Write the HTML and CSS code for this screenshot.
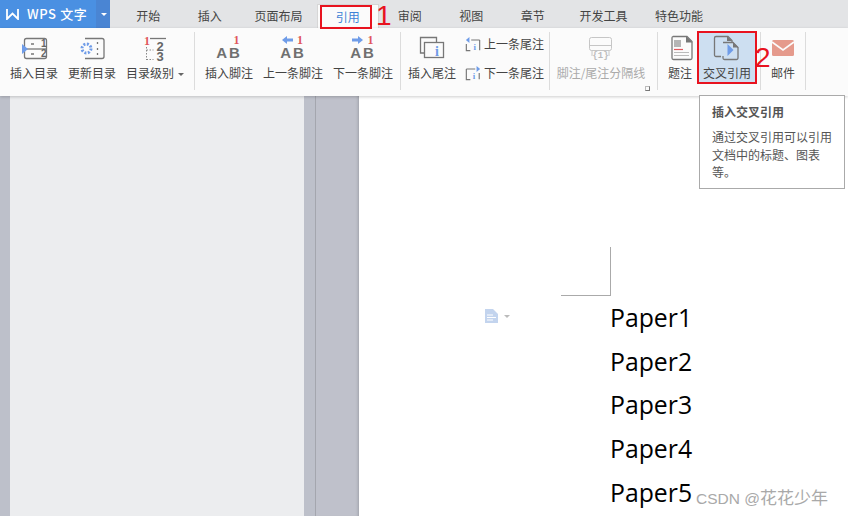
FILE: index.html
```html
<!DOCTYPE html>
<html lang="zh">
<head>
    <meta charset="UTF-8">
    <title>WPS 文字</title>
    <link rel="stylesheet" href="styles.css">
</head>
<body>
<div id="app">
    <div class="tabbar">
        <div class="logo">
            <div class="logo-main">
                <svg class="logo-w" width="13" height="12" viewBox="0 0 13 12"><path d="M1 1v10l5.500-5.500L12 11V1" fill="none" stroke="#fff" stroke-width="1.8"/></svg>
                <span>WPS 文字</span>
            </div>
            <div class="logo-drop"></div>
        </div>
        <ul class="tabs">
            <li class="tab">开始</li>
            <li class="tab">插入</li>
            <li class="tab wide">页面布局</li>
            <li class="tab active">引用</li>
            <li class="tab">审阅</li>
            <li class="tab">视图</li>
            <li class="tab">章节</li>
            <li class="tab wide dev">开发工具</li>
            <li class="tab wide">特色功能</li>
        </ul>
    </div>

    <div class="ribbon">
        <div class="group grp-toc">
            <div class="btn">
                <svg class="ico" viewBox="0 0 40 34"><rect x="10.5" y="7.5" width="22" height="20" rx="2" class="ln"/><path d="M10 18h22" class="ln"/><path d="M8 13l6 5-6 5z" class="blue"/><path d="M17 13h3M17 23h3" class="ln"/><text x="27" y="16" class="num">1</text><text x="27" y="26" class="num">2</text></svg>
                <span class="label">插入目录</span>
            </div>
            <div class="btn">
                <svg class="ico" viewBox="0 0 40 34"><path d="M13 7.500h17a2 2 0 0 1 2 2v16a2 2 0 0 1-2 2H13" class="ln"/><circle cx="14.500" cy="17.500" r="4.500" fill="none" stroke="#6f9ce8" stroke-width="3" stroke-dasharray="2 1.500"/><path d="M25.500 11v2M25.500 17v2M25.500 22v2" class="ln"/></svg>
                <span class="label">更新目录</span>
            </div>
            <div class="btn btn-more">
                <svg class="ico" viewBox="0 0 40 34"><text x="12" y="14" class="red-num">1</text><path d="M15 7.500h16" class="ln"/><text x="25" y="19.500" class="big-num">2</text><text x="25" y="30" class="big-num">3</text><path d="M11.500 16v13M11.500 19h7M11.500 28.500h7" class="dots"/></svg>
                <span class="label">目录级别<i class="caret"></i></span>
            </div>
        </div>
        <div class="group grp-foot">
            <div class="btn">
                <svg class="ico" viewBox="0 0 40 34"><text x="27.500" y="13" class="red-num">1</text><text x="20" y="27" class="ab">AB</text></svg>
                <span class="label">插入脚注</span>
            </div>
            <div class="btn btn-long">
                <svg class="ico" viewBox="0 0 40 34"><path d="M9 9l5-4v2.500h6v3h-6V13z" class="blue"/><text x="27" y="13" class="red-num">1</text><text x="20" y="27" class="ab">AB</text></svg>
                <span class="label">上一条脚注</span>
            </div>
            <div class="btn btn-long">
                <svg class="ico" viewBox="0 0 40 34"><path d="M20 9l-5-4v2.500H9v3h6V13z" class="blue"/><text x="27.500" y="13" class="red-num">1</text><text x="20" y="27" class="ab">AB</text></svg>
                <span class="label">下一条脚注</span>
            </div>
        </div>
        <div class="group grp-end">
            <div class="btn">
                <svg class="ico" viewBox="0 0 40 34"><path d="M12 22H8.500V6.500h16V11" class="ln"/><rect x="12.500" y="11.500" width="19" height="15" class="ln"/><text x="25" y="25" class="info">i</text></svg>
                <span class="label">插入尾注</span>
            </div>
            <div class="side">
                <div class="side-row">
                    <svg class="mini" viewBox="0 0 18 18"><path d="M7 4.500h9.500M1.500 9v7.500H6M16.500 4.500V16" class="ln"/><path d="M1 4.500L5 1v7z" class="blue"/><text x="11" y="16" class="info-s">i</text></svg>
                    <span>上一条尾注</span>
                </div>
                <div class="side-row">
                    <svg class="mini" viewBox="0 0 18 18"><path d="M1.500 4.500h10M1.500 4.500v12H6M16 9v7" class="ln"/><path d="M17 4.500L13 1v7z" class="blue"/><text x="10" y="16" class="info-s">i</text></svg>
                    <span>下一条尾注</span>
                </div>
            </div>
        </div>
        <div class="group grp-sep">
            <div class="btn btn-off">
                <svg class="ico" viewBox="0 0 40 34"><rect x="8.500" y="6.500" width="22" height="13" rx="2" class="ln-off"/><path d="M9 14.500h21M11 19v6M28 19v6" class="ln-off"/><text x="19.500" y="27" class="off-num">{1}</text></svg>
                <span class="label">脚注/尾注分隔线</span>
            </div>
            <i class="launcher"></i>
        </div>
        <div class="group grp-cap">
            <div class="btn btn-cap">
                <svg class="ico" viewBox="0 0 40 34"><path d="M13 5.500h14l5 5V27a1.500 1.500 0 0 1-1.500 1.500h-17A1.500 1.500 0 0 1 12 27V7a1.500 1.500 0 0 1 1-1.500z" class="ln"/><path d="M26 5l6.500 6.500H26z" fill="#777"/><rect x="14" y="9" width="7" height="7" fill="#b5b5b5"/><path d="M14 18.500h9" stroke="#e0575c" stroke-width="1.200"/><path d="M14 21.500h15M14 24.500h15" stroke="#bbb"/></svg>
                <span class="label">题注</span>
            </div>
            <div class="btn btn-cross">
                <svg class="ico" viewBox="0 0 40 34"><path d="M14 25.500H9a1.500 1.500 0 0 1-1.500-1.500V7A1.500 1.500 0 0 1 9 5.500h12l4 4V12" class="ln"/><path d="M20 5l5 5h-5z" fill="#777"/><path d="M16 11.500h10l5 5V27a1.500 1.500 0 0 1-1.500 1.500h-12A1.500 1.500 0 0 1 16 27v-2" class="ln"/><path d="M26 11l5.500 5.500H26z" fill="#777"/><path d="M20.500 13l6 6-6 6z" class="blue"/></svg>
                <span class="label">交叉引用</span>
            </div>
        </div>
        <div class="group grp-mail">
            <div class="btn">
                <svg class="ico" viewBox="0 0 40 34"><rect x="9" y="9" width="22" height="16" rx="1.500" fill="#e59a8c"/><path d="M9 11l11 8 11-8" fill="none" stroke="#fbfbfb" stroke-width="1.600"/></svg>
                <span class="label">邮件</span>
            </div>
        </div>
    </div>

    <div class="workspace">
        <div class="strip strip-a"></div>
        <div class="navpane"></div>
        <div class="strip strip-b"></div>
        <div class="strip strip-c"></div>
        <div class="page">
            <div class="crop"></div>
            <p class="para">Paper1</p>
            <p class="para">Paper2</p>
            <p class="para">Paper3</p>
            <p class="para">Paper4</p>
            <p class="para">Paper5</p>
            <div class="para-mark">
                <svg width="13" height="14" viewBox="0 0 13 14"><path d="M0 0h8l5 5v9H0z" fill="#c3d4ee"/><path d="M2 6h6M2 8.500h9M2 11h6" stroke="#fff"/></svg>
                <i class="caret caret-light"></i>
            </div>
        </div>
    </div>

    <div class="tip">
        <h4>插入交叉引用</h4>
        <p>通过交叉引用可以引用文档中的标题、图表等。</p>
    </div>
    <div class="redbox box-tab"></div>
    <div class="redbox box-btn"></div>
    <span class="step step-1">1</span>
    <span class="step step-2">2</span>
    <span class="watermark">CSDN @<span class="wm-cn">花花少年</span></span>
</div>
</body>
</html>
```

FILE: styles.css
```css
*{
    margin: 0;
    padding: 0;
    list-style: none;
    box-sizing: border-box;
}
html,body{
    width: 848px;
    height: 516px;
    overflow: hidden;
    background: #fff;
}
#app{
    position: relative;
    display: flex;
    flex-direction: column;
    width: 848px;
    height: 516px;
    overflow: hidden;
    font: 12px/16px "Noto Sans CJK SC", "Liberation Sans", sans-serif;
    color: #444;
}

/* tabs */
.tabbar{
    display: flex;
    height: 28px;
    background: #e3e4e6;
}
.logo{
    display: flex;
    width: 110px;
    color: #fff;
}
.logo-main{
    display: flex;
    align-items: center;
    gap: 8px;
    width: 96px;
    padding-left: 6px;
    background: #4a90e2;
    font-size: 13px;
    font-weight: 500;
    letter-spacing: .6px;
}
.logo-drop{
    position: relative;
    width: 14px;
    background: #4a85d3;
}
.logo-drop::after{
    content: "";
    position: absolute;
    top: 13px;
    left: 5px;
    border: 3px solid transparent;
    border-top-color: #fff;
    border-bottom: 0;
}
.tabs{
    display: flex;
    margin-left: 7.5px;
}
.tab{
    width: 61.5px;
    height: 28px;
    line-height: 32px;
    text-align: center;
}
.tab.wide{
    width: 76px;
}
.tab.dev{
    width: 75px;
    margin-left: 2.5px;
}
.tab.active{
    width: 62.5px;
    height: 24px;
    margin-top: 4px;
    line-height: 23px;
    color: #3f83d6;
    background: #fbfbfb;
    border: 1px solid #d6d6d6;
    border-bottom: 0;
}

/* ribbon */
.ribbon{
    position: relative;
    z-index: 1;
    display: flex;
    height: 68px;
    padding: 4px 0 6px;
    background: #fbfbfb;
    box-shadow: 0 1px 3px rgba(0,0,0,.2);
}
.group{
    position: relative;
    display: flex;
    height: 58px;
    border-right: 1px solid #dcdcdc;
}
.grp-toc{
    width: 195px;
    padding-left: 5px;
}
.grp-foot{
    width: 206px;
    padding-left: 5px;
}
.grp-end{
    width: 149px;
    padding-left: 2px;
}
.grp-sep{
    width: 108px;
    padding-left: 6px;
}
.grp-cap{
    width: 103px;
    padding-left: 5px;
}
.grp-mail{
    width: 45px;
}
.btn{
    display: flex;
    flex-direction: column;
    align-items: center;
    flex: none;
    width: 58px;
    height: 53px;
    margin-top: -1px;
}
.btn-more{
    width: 68px;
}
.btn-long{
    width: 70px;
}
.btn-off{
    width: 90px;
    color: #aaa;
}
.btn-cap{
    width: 34px;
}
.btn-cross{
    width: 60px;
    background: #cddff1;
}
.grp-mail .btn{
    width: 44px;
}
.ico{
    display: block;
    flex: none;
    width: 40px;
    height: 34px;
}
.label{
    white-space: nowrap;
    line-height: 16px;
}
.caret{
    display: inline-block;
    margin-left: 4px;
    vertical-align: middle;
    border: 3px solid transparent;
    border-top-color: #666;
    border-bottom: 0;
}
.caret-light{
    border-top-color: #bbb;
    margin-left: 6px;
}
.side{
    display: flex;
    flex-direction: column;
    gap: 13px;
    margin-top: 4px;
    margin-left: 3px;
}
.side-row{
    display: flex;
    align-items: center;
    gap: 2px;
    white-space: nowrap;
}
.mini{
    display: block;
    width: 18px;
    height: 16px;
}
.launcher{
    position: absolute;
    right: 7px;
    bottom: -1px;
    width: 5px;
    height: 5px;
    border: 1px solid #777;
    border-top-color: #bbb;
    border-left-color: #bbb;
}

/* svg bits */
.ln{
    fill: none;
    stroke: #777;
    stroke-width: 1.3;
}
.ln-off{
    fill: none;
    stroke: #c6c6c6;
}
.blue{
    fill: #6f9ce8;
}
.dots{
    fill: none;
    stroke: #888;
    stroke-dasharray: 1.5 1.5;
}
.num{
    font: bold 10px "Liberation Sans", sans-serif;
    fill: #666;
}
.big-num{
    font: bold 13px "Liberation Sans", sans-serif;
    fill: #666;
    text-anchor: middle;
}
.red-num{
    font: bold 12px "Liberation Serif", serif;
    fill: #e0575c;
    text-anchor: middle;
}
.ab{
    font: bold 15px "Liberation Sans", sans-serif;
    letter-spacing: 2px;
    fill: #707070;
    text-anchor: middle;
}
.info{
    font: bold 14px "Liberation Serif", serif;
    fill: #6f9ce8;
    text-anchor: middle;
}
.info-s{
    font: bold 10px "Liberation Serif", serif;
    fill: #6f9ce8;
    text-anchor: middle;
}
.off-num{
    font: bold 9px "Liberation Mono", monospace;
    fill: #bbb;
    text-anchor: middle;
}

/* document area */
.workspace{
    display: flex;
    flex: 1;
    min-height: 0;
}
.strip{
    flex: none;
    background: #bdc0ca;
}
.strip-a{
    width: 10px;
}
.navpane{
    width: 294px;
    background: #ecedef;
}
.strip-b{
    width: 12px;
    border-right: 1px solid #a4a6ae;
}
.strip-c{
    width: 43px;
    background: #bfc1cb;
    box-shadow: inset -3px 0 3px -2px #9fa1a9;
}
.page{
    position: relative;
    flex: 1;
    padding: 151px 0 0 202px;
    background: #fff;
}
.crop{
    width: 50px;
    height: 49px;
    border-right: 1px solid #aaa;
    border-bottom: 1px solid #aaa;
}
.para{
    margin-left: 49px;
    font: 24.8px/43.7px "Open Sans", "Noto Sans", sans-serif;
    color: #000;
    white-space: nowrap;
}
.para-mark{
    position: absolute;
    top: 213px;
    left: 126px;
    display: flex;
    align-items: center;
}

/* things lying over the ribbon */
.tip{
    position: absolute;
    z-index: 2;
    top: 95px;
    left: 699px;
    width: 146px;
    height: 94px;
    padding: 8px 12px;
    background: #fff;
    border: 1px solid #aaa;
    color: #555;
}
.tip h4{
    margin-bottom: 8px;
    font-size: 12px;
    font-weight: 700;
    line-height: 16px;
}
.tip p{
    line-height: 17.5px;
}
.redbox{
    position: absolute;
    z-index: 3;
    border: 2px solid #e8131f;
}
.box-tab{
    top: 5px;
    left: 320px;
    width: 52px;
    height: 24px;
}
.box-btn{
    top: 31px;
    left: 697px;
    width: 60px;
    height: 53px;
}
.step{
    position: absolute;
    z-index: 3;
    font: 28px/28px "Liberation Sans", sans-serif;
    color: #e8131f;
}
.step-1{
    top: 2px;
    left: 376px;
}
.step-2{
    top: 44px;
    left: 755px;
}
.watermark{
    position: absolute;
    z-index: 3;
    top: 489px;
    left: 696px;
    font: 15.5px/20px "Liberation Sans", "Noto Sans CJK SC", sans-serif;
    color: #a9a9a9;
    white-space: nowrap;
}
.wm-cn{
    font-size: 17px;
}
```
